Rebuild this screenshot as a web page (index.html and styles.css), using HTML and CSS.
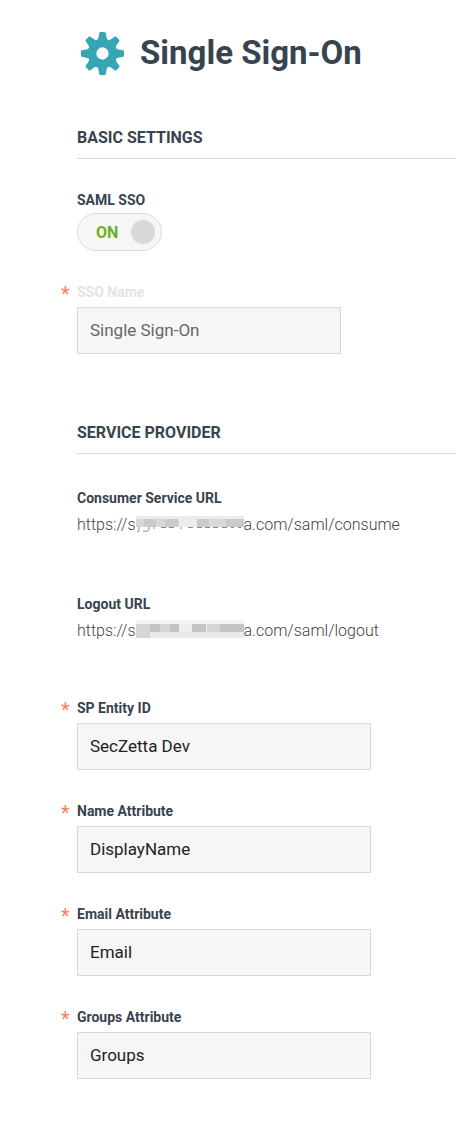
FILE: index.html
```html
<!DOCTYPE html>
<html lang="en">
<head>
<meta charset="utf-8">
<meta name="viewport" content="width=device-width, initial-scale=1">
<title>Single Sign-On</title>
<link rel="stylesheet" href="styles.css">
</head>
<body>
<main class="page">
  <header class="title">
    <svg class="gear" viewBox="-21 -21 42 42" aria-hidden="true">
      <defs><path id="tooth" d="M-5-13Q-3.700-15-3.300-19.500Q-3.200-21-2-21H2Q3.200-21 3.300-19.500Q3.700-15 5-13Z"/></defs>
      <circle r="10.200" fill="none" stroke="currentColor" stroke-width="8.400"/>
      <g fill="currentColor">
        <use href="#tooth"/><use href="#tooth" transform="rotate(45)"/><use href="#tooth" transform="rotate(90)"/><use href="#tooth" transform="rotate(135)"/><use href="#tooth" transform="rotate(180)"/><use href="#tooth" transform="rotate(225)"/><use href="#tooth" transform="rotate(270)"/><use href="#tooth" transform="rotate(315)"/>
      </g>
    </svg>
    <h1>Single Sign-On</h1>
  </header>

  <section class="section">
    <h2>BASIC SETTINGS</h2>
    <div class="switch-field">
      <label class="label" for="saml">SAML SSO</label>
      <span class="switch">
        <input type="checkbox" id="saml" role="switch" checked>
        <span class="switch-text">ON</span>
        <span class="knob"></span>
      </span>
    </div>
    <div class="field narrow">
      <label class="label required muted" for="name">SSO Name</label>
      <input class="text" id="name" type="text" value="Single Sign-On" disabled>
    </div>
  </section>

  <section class="section">
    <h2>SERVICE PROVIDER</h2>
    <dl class="urls">
      <div>
        <dt class="label">Consumer Service URL</dt>
        <dd>https://s<svg class="mask" viewBox="0 0 108 22" aria-hidden="true">
          <rect y="3" width="108" height="11" fill="#d7d9d8"/>
          <g fill="#ececec"><rect y="3" width="108" height="3"/><rect x="43" y="6" width="18" height="8"/></g>
          <g fill="#c8cbca"><rect x="8" y="6" width="12" height="8"/><rect x="29" y="6" width="13" height="8"/><rect x="61" y="6" width="12" height="8"/><rect x="90" y="6" width="18" height="8"/></g>
          <g fill="none" stroke="#888"><path d="M3 14v3q0 2-2 2M13 14v2q0 3-6 2M18 14v2M25 14.500h5M33 14.500h5M45 14v2M52 14.500h5M61 14.500h5M69 14.500h5M77 14.500h5M86 14.500h5M95 14.500h3M102 14.500h3"/></g>
        </svg>a.com/saml/consume</dd>
      </div>
      <div>
        <dt class="label">Logout URL</dt>
        <dd>https://s<svg class="mask" viewBox="0 0 108 22" aria-hidden="true">
          <rect y="1" width="108" height="18" fill="#e9eaea"/>
          <rect y="1" width="108" height="4" fill="#f3f3f3"/>
          <g fill="#d5d7d6"><rect y="5" width="14" height="14"/><rect x="24" y="5" width="10" height="8"/><rect x="71" y="5" width="13" height="8"/></g>
          <g fill="#c3c5c5"><rect x="14" y="5" width="10" height="8"/><rect x="34" y="5" width="9" height="8"/><rect x="56" y="5" width="14" height="8"/><rect x="84" y="5" width="24" height="8"/></g>
          <rect x="43" y="5" width="13" height="8" fill="#eeeeee"/>
        </svg>a.com/saml/logout</dd>
      </div>
    </dl>
    <div class="fields">
      <div class="field">
        <label class="label required" for="entity">SP Entity ID</label>
        <input class="text" id="entity" type="text" value="SecZetta Dev">
      </div>
      <div class="field">
        <label class="label required" for="nameattr">Name Attribute</label>
        <input class="text" id="nameattr" type="text" value="DisplayName">
      </div>
      <div class="field">
        <label class="label required" for="email">Email Attribute</label>
        <input class="text" id="email" type="text" value="Email">
      </div>
      <div class="field">
        <label class="label required" for="groups">Groups Attribute</label>
        <input class="text" id="groups" type="text" value="Groups">
      </div>
    </div>
  </section>
</main>
</body>
</html>
```
FILE: styles.css
```css
* { box-sizing: border-box; }
body {
  margin: 0;
  background: #fff;
  color: #37444f;
  font-family: Roboto, "Liberation Sans", sans-serif;
}
.page { padding: 32px 4px 46px 77px; }
.title {
  display: flex;
  align-items: center;
  gap: 16px;
  padding-left: 4px;
  height: 42px;
}
.gear { width: 43px; height: 43px; color: #37a6b3; }
h1 { margin: 0; font-size: 33px; line-height: 44px; font-weight: 700; }
.section { padding-top: 52px; }
h2 {
  margin: 0;
  padding-bottom: 9px;
  border-bottom: 1px solid #d9d9d9;
  font-size: 16px;
  line-height: 23px;
  font-weight: 700;
}
.label {
  display: block;
  font-size: 14px;
  line-height: 20px;
  font-weight: 700;
}
.switch-field { padding-top: 31px; }
.switch {
  position: relative;
  display: flex;
  align-items: center;
  justify-content: space-between;
  width: 85px;
  height: 38px;
  margin-top: 3px;
  padding: 0 6px 0 18px;
  border: 1px solid #dcdcdc;
  border-radius: 19px;
  background: #f6f6f6;
}
.switch input {
  position: absolute;
  inset: 0;
  width: 100%;
  height: 100%;
  margin: 0;
  opacity: 0;
}
.switch-text { color: #6cae24; font-size: 16px; font-weight: 700; }
.knob { width: 24px; height: 24px; border-radius: 50%; background: #d8d8d8; }
.field { position: relative; max-width: 294px; }
.narrow { max-width: 264px; margin-top: 31px; }
.required::before {
  content: "*";
  position: absolute;
  left: -16px;
  top: 2px;
  color: #ff7f5c;
  font-size: 20px;
  font-weight: 400;
}
.muted { color: #e4e4e4; }
.text {
  display: block;
  width: 100%;
  height: 47px;
  margin-top: 5px;
  padding: 0 12px 2px;
  border: 1px solid #d8d8d8;
  border-radius: 0;
  background: #f6f6f6;
  color: #222;
  font-family: inherit;
  font-size: 17px;
}
.text:disabled { color: #666; }
.section + .section { padding-top: 67px; }
.urls {
  display: grid;
  gap: 57px;
  margin: 0;
  padding-top: 34px;
}
dd {
  display: flex;
  margin: 5px 0 0;
  color: #444;
  font-size: 16px;
  line-height: 24px;
  font-weight: 300;
}
.mask { width: 108px; height: 22px; flex: none; }
.fields { display: grid; gap: 31px; padding-top: 55px; }
```
